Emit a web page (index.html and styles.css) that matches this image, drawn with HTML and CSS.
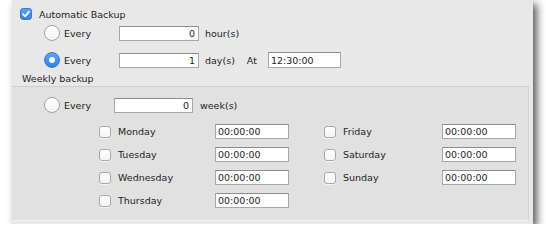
FILE: index.html
```html
<!DOCTYPE html>
<html lang="en">
<head>
  <meta charset="UTF-8">
  <meta name="viewport" content="width=device-width, initial-scale=1.0">
  <title>Backup Schedule</title>
  <link rel="stylesheet" href="styles.css">
</head>
<body>
  <div class="window">
    <div class="row head">
      <span class="check on">
        <svg width="12" height="12" viewBox="0 0 12 12"><path d="M3 6.2 L5.1 8.4 L9 3.6" fill="none" stroke="#fff" stroke-width="1.7" stroke-linecap="round" stroke-linejoin="round"/></svg>
      </span>
      <span>Automatic Backup</span>
    </div>

    <div class="row every first">
      <span class="radio"></span>
      <span class="lbl">Every</span>
      <input type="text" class="field num" value="0">
      <span class="unit">hour(s)</span>
    </div>

    <div class="row every second">
      <span class="radio on"></span>
      <span class="lbl">Every</span>
      <input type="text" class="field num" value="1">
      <span class="unit">day(s)</span>
      <span class="at">At</span>
      <input type="text" class="field time-at" value="12:30:00">
    </div>

    <div class="row title">Weekly backup</div>

    <div class="group">
      <div class="row every weekly">
        <span class="radio"></span>
        <span class="lbl">Every</span>
        <input type="text" class="field num week" value="0">
        <span class="unit">week(s)</span>
      </div>

      <div class="days">
        <span class="check"></span><span>Monday</span><input type="text" class="field time" value="00:00:00">
        <span></span>
        <span class="check"></span><span>Friday</span><input type="text" class="field time" value="00:00:00">

        <span class="check"></span><span>Tuesday</span><input type="text" class="field time" value="00:00:00">
        <span></span>
        <span class="check"></span><span>Saturday</span><input type="text" class="field time" value="00:00:00">

        <span class="check"></span><span>Wednesday</span><input type="text" class="field time" value="00:00:00">
        <span></span>
        <span class="check"></span><span>Sunday</span><input type="text" class="field time" value="00:00:00">

        <span class="check"></span><span>Thursday</span><input type="text" class="field time" value="00:00:00">
      </div>
    </div>
  </div>
</body>
</html>
```

FILE: styles.css
```css
body {
  margin: 0;
  background: #fff;
  font-family: "DejaVu Sans", sans-serif;
  font-size: 9.5px;
  color: #1e1e1e;
}
.window {
  margin-left: 12px;
  width: 521px;
  height: 224px;
  box-sizing: border-box;
  padding-top: 6px;
  background: #e8e8e8;
  box-shadow: 4px 4px 8px rgba(0, 0, 0, 0.65);
}
.row {
  display: flex;
  align-items: center;
}
.head {
  height: 16px;
  padding-left: 8px;
}
.head .check {
  margin-right: 7px;
}
.every {
  height: 20px;
  padding-left: 32px;
}
.first {
  margin-top: 1px;
}
.second {
  margin-top: 7px;
}
.lbl {
  margin-left: 4px;
  width: 55px;
}
.weekly .lbl {
  width: 50px;
}
.unit {
  margin-left: 6px;
}
.weekly .unit {
  margin-left: 7px;
}
.at {
  margin-left: 12px;
  margin-right: 11px;
}
.title {
  height: 16px;
  padding-left: 10px;
}
.group {
  height: 135px;
  box-sizing: border-box;
  margin-right: 4px;
  padding-top: 8px;
  background: #e1e1e1;
  border-top: 1px solid #cfcfcf;
  border-right: 1px solid #d6d6d6;
  border-bottom: 1px solid #f2f2f2;
}
.days {
  display: grid;
  grid-template-columns: 19px 97px 74px 35px 19px 99px 74px;
  grid-auto-rows: 23px;
  align-items: center;
  margin-top: 5px;
  padding-left: 87px;
}
.field {
  height: 15px;
  box-sizing: border-box;
  margin: 0;
  padding: 0 2px;
  border: 1px solid #a6a6a6;
  border-top-color: #8e8e8e;
  border-radius: 0;
  background: #fff;
  font-family: "DejaVu Sans", sans-serif;
  font-size: 9.5px;
  color: #1e1e1e;
  outline: none;
}
.num {
  width: 80px;
  text-align: right;
  padding-right: 3px;
}
.week {
  width: 79px;
}
.time-at {
  width: 73px;
  height: 16px;
}
.time {
  width: 74px;
}
.check {
  width: 12px;
  height: 12px;
  box-sizing: border-box;
  border: 1px solid #a9a9a9;
  border-radius: 3px;
  background: linear-gradient(#fff, #f4f4f4);
  box-shadow: 0 1px 0 rgba(255, 255, 255, 0.6);
}
.check svg {
  display: block;
  margin: -1px;
}
.check.on {
  border-color: #3579e0;
  background: linear-gradient(#5aa4f7, #2f80ec);
}
.radio {
  width: 16px;
  height: 16px;
  box-sizing: border-box;
  border: 1px solid #a3a3a3;
  border-radius: 50%;
  background: linear-gradient(#fff, #f3f3f3);
  display: flex;
  align-items: center;
  justify-content: center;
}
.radio.on {
  border-color: #3579e0;
  background: linear-gradient(#5aa4f7, #2f80ec);
}
.radio.on::after {
  content: "";
  width: 6px;
  height: 6px;
  border-radius: 50%;
  background: #fff;
}
```
